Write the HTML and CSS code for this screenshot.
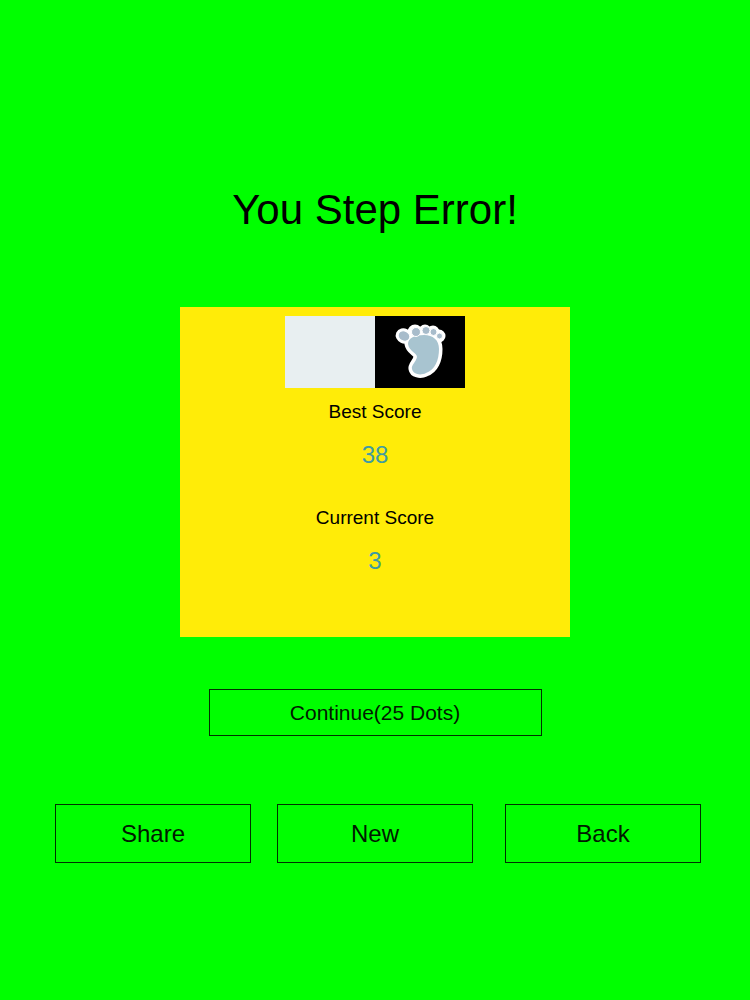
FILE: index.html
```html
<!DOCTYPE html>
<html lang="en">
<head>
    <meta charset="UTF-8">
    <meta name="viewport" content="width=device-width, initial-scale=1.0">
    <title>You Step Error!</title>
    <link rel="stylesheet" href="styles.css">
</head>
<body>

    <main class="game-over">
        <h1>You Step Error!</h1>

        <section class="score-card">
            <div class="tiles">
                <div class="tile tile-light"></div>
                <div class="tile tile-dark">
                    <svg class="foot" viewBox="0 0 90 72" aria-hidden="true">
                        <!-- white outline -->
                        <g fill="#fff" stroke="#fff" stroke-width="7" stroke-linejoin="round">
                            <path d="M33 28C33 22 40 19 49 19C58 19 64 24 64 33C64 44 60 54 51 57C45 60 38 58 37 53C36 49 41 46 42 41C42 37 34 35 33 28Z"/>
                            <ellipse cx="29" cy="20" rx="5" ry="4" transform="rotate(25 29 20)"/>
                            <ellipse cx="40" cy="16" rx="4" ry="4"/>
                            <ellipse cx="50" cy="15" rx="3" ry="3"/>
                            <ellipse cx="58" cy="16" rx="3" ry="3"/>
                            <ellipse cx="64" cy="20" rx="3" ry="3"/>
                        </g>
                        <path fill="#a8c4d0" d="M33 28C33 22 40 19 49 19C58 19 64 24 64 33C64 44 60 54 51 57C45 60 38 58 37 53C36 49 41 46 42 41C42 37 34 35 33 28Z"/>
                        <g fill="#a8bccb" stroke="#fff" stroke-width="1">
                            <ellipse cx="29" cy="20" rx="6" ry="5" transform="rotate(25 29 20)"/>
                            <ellipse cx="41" cy="16" rx="4.500" ry="4.500"/>
                            <ellipse cx="51" cy="14.500" rx="4" ry="4"/>
                            <ellipse cx="58.500" cy="16" rx="3.500" ry="3.500"/>
                            <ellipse cx="64.500" cy="20" rx="3" ry="3"/>
                        </g>
                    </svg>
                </div>
            </div>
            <h2>Best Score</h2>
            <p class="score">38</p>
            <h2>Current Score</h2>
            <p class="score">3</p>
        </section>

        <button type="button" class="btn btn-continue">Continue(25 Dots)</button>

        <div class="actions">
            <button type="button" class="btn">Share</button>
            <button type="button" class="btn">New</button>
            <button type="button" class="btn btn-last">Back</button>
        </div>
    </main>

</body>
</html>
```
FILE: styles.css
```css
body {
    margin: 0;
    background-color: #00ff00;
    color: #000;
    font-family: "Liberation Sans", Arial, sans-serif;
}
.game-over {
    display: flex;
    flex-direction: column;
    align-items: center;
    padding: 186px 0 40px;
}
h1 {
    margin: 0;
    font-size: 42px;
    font-weight: normal;
    line-height: 48px;
}
.score-card {
    box-sizing: border-box;
    width: 52%;
    margin-top: 73px;
    padding: 9px 0 61px;
    background-color: #ffec08;
    text-align: center;
}
.tiles {
    display: flex;
    justify-content: center;
}
.tile {
    width: 90px;
    height: 72px;
}
.tile-light {
    background-color: #e8eff1;
}
.tile-dark {
    background-color: #000;
}
.foot {
    display: block;
    width: 100%;
    height: 100%;
}
h2 {
    margin: 12px 0 16px;
    font-size: 19px;
    font-weight: normal;
    line-height: 24px;
}
.score {
    margin: 0 0 36px;
    color: #3f9ba0;
    font-size: 24px;
    line-height: 30px;
}
.score:last-child {
    margin-bottom: 0;
}
.btn {
    box-sizing: border-box;
    height: 59px;
    padding: 0;
    border: 1px solid #003000;
    background-color: transparent;
    color: #001a00;
    font-family: inherit;
    font-size: 24px;
    cursor: pointer;
}
.btn-continue {
    width: 333px;
    height: 47px;
    margin-top: 52px;
    font-size: 21px;
}
.actions {
    display: grid;
    grid-template-columns: 196px 196px 202px;
    justify-content: center;
    column-gap: 26px;
    box-sizing: border-box;
    width: 100%;
    margin-top: 68px;
    padding-left: 6px;
}
.btn-last {
    justify-self: end;
    width: 196px;
}
```
